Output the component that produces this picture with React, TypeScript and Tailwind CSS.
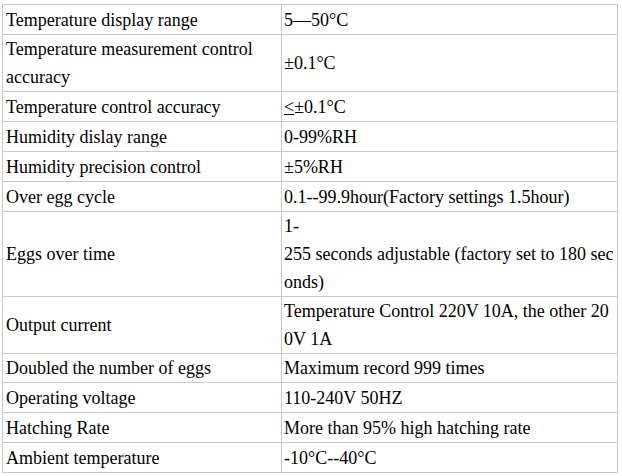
const rows: { label: React.ReactNode; value: React.ReactNode; h: string }[] = [
  { label: "Temperature display range", value: "5—50°C", h: "h-[30px]" },
  {
    label: "Temperature measurement control accuracy",
    value: "±0.1°C",
    h: "h-[57px]",
  },
  { label: "Temperature control accuracy", value: <><span className="underline">&lt;</span>±0.1°C</>, h: "h-[30px]" },
  { label: "Humidity dislay range", value: "0-99%RH", h: "h-[30px]" },
  { label: "Humidity precision control", value: "±5%RH", h: "h-[30px]" },
  { label: "Over egg cycle", value: "0.1--99.9hour(Factory settings 1.5hour)", h: "h-[30px]" },
  {
    label: "Eggs over time",
    value: (
      <>
        1-
        <br />
        255 seconds adjustable (factory set to 180 sec
        <br />
        onds)
      </>
    ),
    h: "h-[85px]",
  },
  {
    label: "Output current",
    value: (
      <>
        Temperature Control 220V 10A, the other 20
        <br />
        0V 1A
      </>
    ),
    h: "h-[57px]",
  },
  { label: "Doubled the number of eggs", value: "Maximum record 999 times", h: "h-[29px]" },
  { label: "Operating voltage", value: "110-240V 50HZ", h: "h-[30px]" },
  { label: "Hatching Rate", value: "More than 95% high hatching rate", h: "h-[30px]" },
  { label: "Ambient temperature", value: "-10°C--40°C", h: "h-[30px]" },
];

export default function App() {
  return (
    <div className="min-h-screen bg-white pt-[4px] pl-[2px] font-['Liberation_Serif',serif] text-[18px] leading-[28px] text-black">
      <div className="w-[616px] border-t border-l border-[#c8c8c8]">
        {rows.map((r, i) => (
          <div key={i} className={`grid grid-cols-[279px_336px] ${r.h}`}>
            <div className="flex items-center border-r border-b border-[#c8c8c8] pl-[3px] pr-2">
              {r.label}
            </div>
            <div className="flex items-center border-r border-b border-[#c8c8c8] pl-[2px] whitespace-nowrap">
              <div>{r.value}</div>
            </div>
          </div>
        ))}
      </div>
    </div>
  );
}
